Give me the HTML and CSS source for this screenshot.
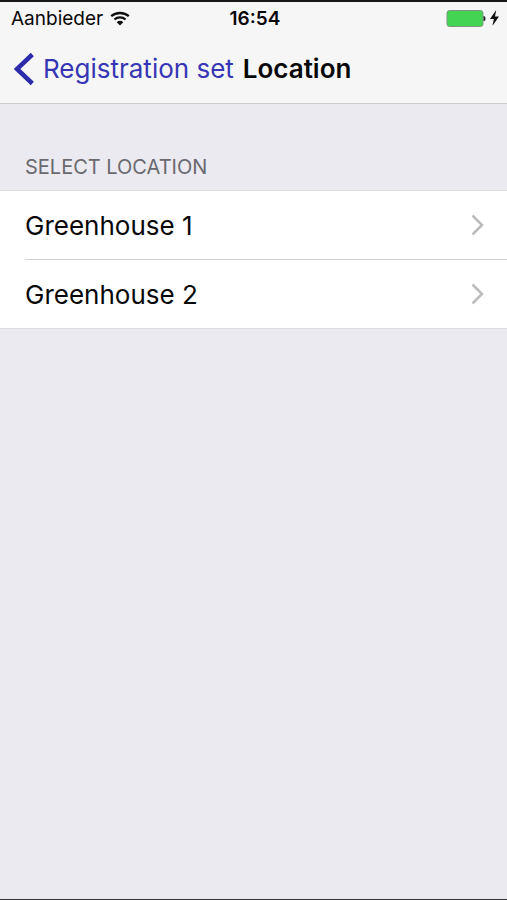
FILE: index.html
```html
<!DOCTYPE html>
<html lang="en">
<head>
<meta charset="utf-8">
<meta name="viewport" content="width=device-width, initial-scale=1">
<title>Location</title>
<link rel="stylesheet" href="styles.css">
</head>
<body>
<header class="top">
  <div class="status">
    <div class="carrier">
      <span>Aanbieder</span>
      <svg class="wifi" viewBox="0 0 20 15" aria-hidden="true">
        <path d="M1.2 5.2C6 .9 14 .9 18.8 5.2M4.4 8.5c3.2-2.9 8-2.9 11.2 0" fill="none" stroke="#111" stroke-width="2.3"/>
        <path d="M6.7 11.2c1.9-1.8 4.7-1.8 6.6 0L10 14.6z" fill="#111"/>
      </svg>
    </div>
    <time class="clock">16:54</time>
    <div class="power">
      <svg class="battery" viewBox="0 0 40 17" aria-hidden="true">
        <rect x="1" y=".5" width="36" height="16" rx="2.5" fill="#43d551" stroke="#7f9782"/>
        <path d="M37.5 6h.5q1.500 0 1.500 2.500T38 11h-.5z" fill="#222"/>
      </svg>
      <svg class="bolt" viewBox="0 0 9 16" aria-hidden="true">
        <path d="M6.2 0 0 9h3.900L2.400 16 9 6.600H5z" fill="#111"/>
      </svg>
    </div>
  </div>
  <nav class="nav">
    <a class="back" href="#">
      <svg class="back-icon" viewBox="0 0 20 34" aria-hidden="true">
        <path d="M18.300 2.500 3 17l15.300 14.500" fill="none" stroke="#2c2cab" stroke-width="4.500"/>
      </svg>
      <span>Registration set</span>
    </a>
    <h1 class="title">Location</h1>
  </nav>
</header>
<main>
  <h2 class="heading">SELECT LOCATION</h2>
  <ul class="list">
    <li class="item">
      <a class="row" href="#">
        <span>Greenhouse 1</span>
        <svg class="chevron" viewBox="0 0 13 22" aria-hidden="true"><path d="m1.500 1.500 9.500 9.500-9.500 9.500" fill="none" stroke="#bcbcbe" stroke-width="2.500"/></svg>
      </a>
    </li>
    <li class="item">
      <a class="row" href="#">
        <span>Greenhouse 2</span>
        <svg class="chevron" viewBox="0 0 13 22" aria-hidden="true"><path d="m1.500 1.500 9.500 9.500-9.500 9.500" fill="none" stroke="#bcbcbe" stroke-width="2.500"/></svg>
      </a>
    </li>
  </ul>
</main>
</body>
</html>
```
FILE: styles.css
```css
* {
  box-sizing: border-box;
}

body {
  display: flex;
  flex-direction: column;
  min-height: 100vh;
  margin: 0;
  border-top: 2px solid #171719;
  border-bottom: 1px solid #39393c;
  background: #ebeaf0;
  color: #080808;
  font-family: Inter, "Liberation Sans", sans-serif;
}

a {
  color: inherit;
  text-decoration: none;
}

svg {
  display: block;
  flex: none;
}

.top {
  background: #f6f6f7;
  border-bottom: 1px solid #cfcfd2;
}

.status {
  display: grid;
  grid-template-columns: 1fr auto 1fr;
  align-items: center;
  height: 32px;
  padding: 0 8px 0 11px;
  font-size: 19px;
}

.carrier,
.power {
  display: flex;
  align-items: center;
  gap: 7px;
}

.wifi {
  width: 20px;
  height: 15px;
}

.clock {
  font-weight: 600;
}

.power {
  justify-content: flex-end;
  gap: 4px;
}

.battery {
  width: 40px;
  height: 17px;
}

.bolt {
  width: 9px;
  height: 16px;
}

.nav {
  display: flex;
  align-items: center;
  gap: 9px;
  height: 69px;
  padding: 0 14px;
  font-size: 26px;
}

.back {
  display: flex;
  align-items: center;
  gap: 9px;
  color: #3636b5;
}

.back-icon {
  width: 20px;
  height: 34px;
}

.title {
  margin: 0;
  font-size: 26px;
  font-weight: 600;
}

.heading {
  margin: 0;
  padding: 50px 25px 10px;
  color: #69696e;
  font-size: 20px;
  font-weight: 400;
  line-height: 26px;
}

.list {
  margin: 0;
  padding: 0;
  border-top: 1px solid #dddce1;
  border-bottom: 1px solid #dddce1;
  background: #fff;
  list-style: none;
}

.item {
  padding-left: 25px;
}

.row {
  display: flex;
  align-items: center;
  justify-content: space-between;
  height: 68px;
  padding-right: 23px;
  font-size: 26px;
}

.item + .item .row {
  height: 69px;
  border-top: 1px solid #d2d2d5;
}

.chevron {
  width: 13px;
  height: 22px;
}
```
